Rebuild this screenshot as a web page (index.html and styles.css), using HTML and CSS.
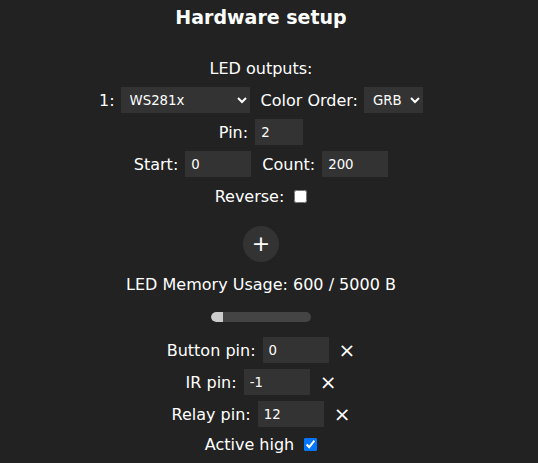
FILE: index.html
```html
<!DOCTYPE html>
<html>
<head>
<meta charset="utf-8">
<link rel="stylesheet" href="styles.css">
</head>
<body>
<div class="page">
  <h2 class="title">Hardware setup</h2>
  <div class="row first">LED outputs:</div>
  <div class="row">
    <span>1:</span>
    <select class="sel-type"><option>WS281x</option></select>
    <span class="lbl">Color Order:</span>
    <select class="sel-order"><option>GRB</option></select>
  </div>
  <div class="row">
    <span>Pin:</span>
    <input class="num xs" type="text" value="2">
  </div>
  <div class="row">
    <span>Start:</span>
    <input class="num" type="text" value="0">
    <span class="lbl">Count:</span>
    <input class="num" type="text" value="200">
  </div>
  <div class="row">
    <span>Reverse:</span>
    <input class="chk" type="checkbox">
  </div>
  <div class="row plusrow">
    <button class="plus" type="button">+</button>
  </div>
  <div class="row">LED Memory Usage: 600 / 5000 B</div>
  <div class="barrow">
    <div class="bar"><div class="fill" style="width:12%"></div></div>
  </div>
  <div class="row">
    <span>Button pin:</span>
    <input class="num" type="text" value="0">
    <span class="x">×</span>
  </div>
  <div class="row">
    <span>IR pin:</span>
    <input class="num" type="text" value="-1">
    <span class="x">×</span>
  </div>
  <div class="row">
    <span>Relay pin:</span>
    <input class="num" type="text" value="12">
    <span class="x">×</span>
  </div>
  <div class="row last">
    <span>Active high</span>
    <input class="chk" type="checkbox" checked>
  </div>
</div>
</body>
</html>
```
FILE: styles.css
```css
html, body {
  margin: 0;
  padding: 0;
  background: #222;
  color: #fff;
  font-family: "DejaVu Sans", Verdana, sans-serif;
  font-size: 16px;
}
.page {
  width: 522px;
  display: flex;
  flex-direction: column;
  align-items: center;
}
.title {
  margin: 0;
  height: 34px;
  line-height: 34px;
  font-size: 19px;
  font-weight: bold;
}
.row {
  height: 32px;
  display: flex;
  justify-content: center;
  align-items: center;
  white-space: nowrap;
}
.row.first {
  margin-top: 18px;
}
.row.last {
  height: 28px;
}
select, input.num {
  box-sizing: border-box;
  height: 26px;
  background: #333;
  color: #fff;
  border: 0;
  font-family: "DejaVu Sans", Verdana, sans-serif;
  font-size: 13.3px;
  outline: none;
}
select {
  margin-left: 6px;
  padding: 0 4px 0 5px;
}
.sel-type { width: 129px; }
.sel-order { width: 59px; }
input.num {
  width: 66px;
  margin-left: 7px;
  padding: 0 6px;
}
input.num.xs { width: 48px; }
.lbl { margin-left: 11px; }
.chk {
  margin: 0 0 0 10px;
  width: 13px;
  height: 13px;
}
.plusrow {
  height: 48px;
  margin-top: 8px;
}
.plus {
  width: 36px;
  height: 36px;
  border-radius: 50%;
  border: 0;
  background: #333;
  color: #fff;
  font-family: "DejaVu Sans", Verdana, sans-serif;
  font-size: 22px;
  line-height: 36px;
  padding: 0;
}
.barrow {
  height: 34px;
  display: flex;
  justify-content: center;
  align-items: center;
}
.bar {
  width: 100px;
  height: 10px;
  border-radius: 5px;
  background: #444;
  overflow: hidden;
}
.fill {
  height: 100%;
  background: #ccc;
  border-radius: 5px 0 0 5px;
}
.x {
  margin-left: 10px;
  font-size: 20px;
}
```
